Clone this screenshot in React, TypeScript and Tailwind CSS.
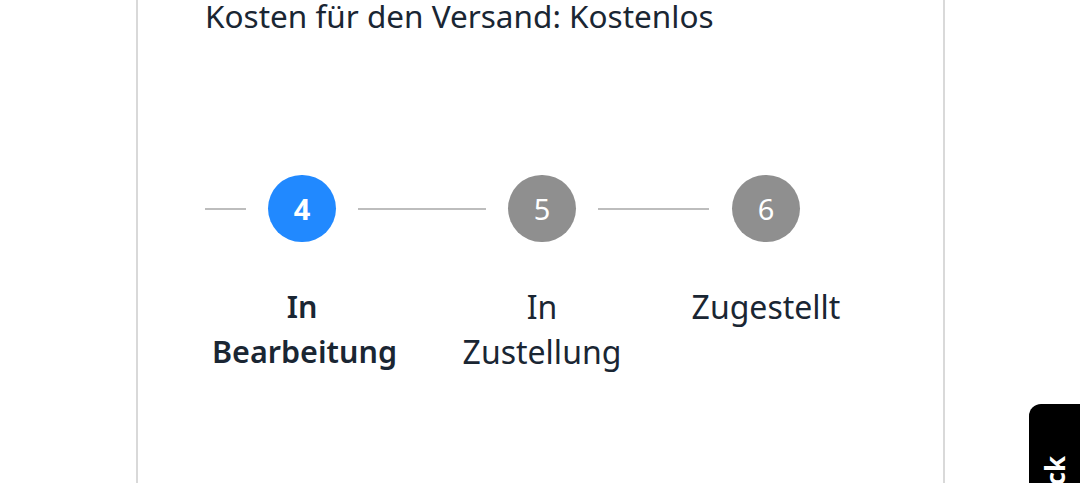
const steps = [
  { n: 4, label: 'In Bearbeitung', active: true },
  { n: 5, label: 'In Zustellung', active: false },
  { n: 6, label: 'Zugestellt', active: false },
];

function Connector({ width, ml, mr }: { width: string; ml: string; mr: string }) {
  return (
    <div className={`h-[68px] flex items-center ${width} ${ml} ${mr}`}>
      <div className="h-[2px] w-full bg-[#bdbdbd]" />
    </div>
  );
}

function Step({ n, label, active }: { n: number; label: string; active: boolean }) {
  return (
    <div className="w-[68px] flex flex-col items-center">
      <div
        className={`w-[68px] h-[67px] rounded-full flex items-center justify-center text-white text-[29px] ${
          active ? 'bg-[#2189ff] font-bold' : 'bg-[#8f8f8f]'
        }`}
      >
        {n}
      </div>
      <div
        className={`w-[180px] mt-[42px] text-center leading-[45px] text-[#1a2633] ${
          active ? 'font-semibold text-[30.5px]' : 'text-[32px]'
        }`}
      >
        {label}
      </div>
    </div>
  );
}

export default function App() {
  return (
    <div
      className="relative w-[1080px] h-[483px] overflow-hidden bg-white"
      style={{ fontFamily: '"Noto Sans", Roboto, sans-serif' }}
    >
      <div className="ml-[136px] w-[809px] h-[483px] border-x-2 border-[#d9d9d9] pl-[67px]">
        <p className="text-[31.5px] leading-[32px] text-[#1a2633]">
          Kosten für den Versand: Kostenlos
        </p>

        <div className="mt-[143px] flex items-start">
          <Connector width="w-[41px]" ml="ml-0" mr="mr-[22px]" />
          <Step {...steps[0]} />
          <Connector width="w-[128px]" ml="ml-[22px]" mr="mr-[22px]" />
          <Step {...steps[1]} />
          <Connector width="w-[111px]" ml="ml-[22px]" mr="mr-[23px]" />
          <Step {...steps[2]} />
        </div>
      </div>

      {/* Feedback tab */}
      <div className="absolute right-0 top-[404px] w-[51px] h-[200px] bg-black rounded-tl-[12px] flex items-start justify-center">
        <span className="mt-[52px] [writing-mode:vertical-rl] rotate-180 text-white font-bold text-[26px] leading-none whitespace-nowrap">
          Feedback
        </span>
      </div>
    </div>
  );
}
